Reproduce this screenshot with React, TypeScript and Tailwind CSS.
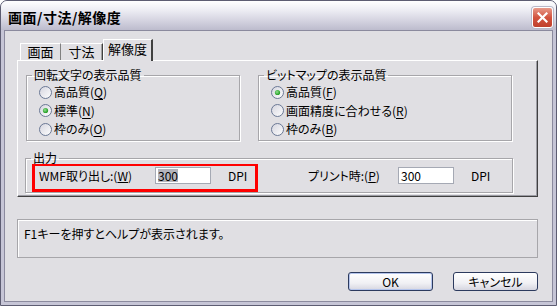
import React from 'react';

const font = "font-['Noto_Sans_CJK_JP','Noto_Sans_CJK_SC',sans-serif] [font-feature-settings:'palt']";

function Radio({ checked }: { checked?: boolean }) {
  return (
    <svg width="13" height="13" viewBox="0 0 13 13" className="shrink-0">
      <defs>
        <linearGradient id="radioFill" x1="0" y1="0" x2="1" y2="1">
          <stop offset="0" stopColor="#d4d4de" />
          <stop offset="1" stopColor="#ffffff" />
        </linearGradient>
        <radialGradient id="radioDot" cx="0.4" cy="0.4" r="0.6">
          <stop offset="0" stopColor="#8fe08f" />
          <stop offset="1" stopColor="#1f9a1f" />
        </radialGradient>
      </defs>
      <circle cx="6.5" cy="6.5" r="6" fill="url(#radioFill)" stroke="#6a7894" />
      {checked && <circle cx="6.5" cy="6.5" r="2.6" fill="url(#radioDot)" />}
    </svg>
  );
}

function Option({ text, mn, checked }: { text: string; mn: string; checked?: boolean }) {
  return (
    <div className="h-[18.5px] flex items-center gap-[2px] pl-[12px]">
      <Radio checked={checked} />
      <span>
        {text}(<u className="underline-offset-2">{mn}</u>)
      </span>
    </div>
  );
}

function Group({ title, width, children }: { title: string; width: string; children: React.ReactNode }) {
  return (
    <fieldset className={`${width} h-[73px] border border-[#a7a6aa] shadow-[inset_1px_1px_0_#ffffff,1px_1px_0_#ffffff]`}>
      <legend className="ml-[5px] px-[2px] leading-[14px]">{title}</legend>
      <div className="pt-[1px] flex flex-col">{children}</div>
    </fieldset>
  );
}

export default function App() {
  return (
    <div className={`relative w-[557px] h-[306px] text-[12px] text-black ${font}`}>
      <div className="h-full flex flex-col rounded-t-[7px] border border-[#5d5d72] bg-[#c6c5d6] overflow-hidden">
        {/* Title bar */}
        <div className="h-[29px] flex items-center pl-[7px] pr-[3px] pt-[3px] bg-[linear-gradient(to_bottom,#ffffff,#ebebf2_35%,#cfcedc_75%,#bdbccd)]">
          <span className="text-[14px] font-bold tracking-[0.5px]">画面/寸法/解像度</span>
          <div className="ml-auto w-[21px] h-[21px] rounded-[3px] border border-white bg-[linear-gradient(to_bottom,#e89a8a,#d2533f_50%,#c0402c)] flex items-center justify-center shadow-[0_0_0_1px_#b9b8c8]">
            <svg width="11" height="11" viewBox="0 0 11 11">
              <path d="M1.5 1.5l8 8M9.5 1.5l-8 8" stroke="#ffffff" strokeWidth="2.2" strokeLinecap="square" />
            </svg>
          </div>
        </div>

        {/* Body */}
        <div className="flex-1 mx-[3px] mb-[3px] border border-[#8b8a9e] bg-[#e0dfe3] flex flex-col pl-[12px] pr-[13px]">
          {/* Tabs */}
          <div className="mt-[8px] h-[21px] flex items-end pl-[3px]">
            <div className="w-[41px] h-[17px] border-t border-l border-white border-r border-r-[#808080] flex items-center justify-center leading-[14px] text-[13px]">画面</div>
            <div className="w-[42px] h-[17px] border-t border-white border-r border-r-[#404040] shadow-[inset_-1px_0_0_#a0a0a0] flex items-center justify-center leading-[14px] text-[13px]">寸法</div>
            <div className="relative z-10 -mb-px w-[50px] h-[22px] bg-[#e0dfe3] border-t border-l border-white border-r-2 border-r-[#404040] flex items-start justify-center pt-[2px] leading-[14px] text-[13px]">解像度</div>
          </div>

          {/* Panel */}
          <div className="h-[137px] w-[521px] border border-[#404040] border-t-white border-l-white shadow-[inset_-1px_-1px_0_#9c9ca4] pl-[8px] pt-[7px]">
            <div className="flex gap-[18px]">
              <Group title="回転文字の表示品質" width="w-[214px]">
                <Option text="高品質" mn="Q" />
                <Option text="標準" mn="N" checked />
                <Option text="枠のみ" mn="O" />
              </Group>
              <Group title="ビットマップの表示品質" width="w-[254px]">
                <Option text="高品質" mn="F" checked />
                <Option text="画面精度に合わせる" mn="R" />
                <Option text="枠のみ" mn="B" />
              </Group>
            </div>

            <fieldset className="mt-[10px] -ml-px w-[488px] h-[42px] border border-[#a7a6aa] shadow-[inset_1px_1px_0_#ffffff,1px_1px_0_#ffffff]">
              <legend className="ml-[5px] px-[2px] leading-[14px]">出力</legend>
              <div className="pt-[2px] pl-[13px] flex items-center h-[19px]">
                <span className="w-[116px]">
                  WMF取り出し:(<u>W</u>)
                </span>
                <div className="w-[56px] h-[17px] bg-white border border-[#a5a9b4] flex items-center pl-[2px]">
                  <span className="bg-[#b4b4bc] leading-[13px]">300</span>
                </div>
                <span className="ml-[17px] w-[80px]">DPI</span>
                <span className="w-[90px]">
                  プリント時:(<u>P</u>)
                </span>
                <div className="w-[56px] h-[17px] bg-white border border-[#a5a9b4] flex items-center pl-[2px]">
                  <span className="leading-[13px]">300</span>
                </div>
                <span className="ml-[17px]">DPI</span>
              </div>
            </fieldset>
          </div>

          {/* Status */}
          <div className="mt-[22px] w-[521px] h-[39px] border border-[#a7a6aa] shadow-[inset_1px_1px_0_#ffffff] pl-[6px] pt-[6px] leading-[16px]">
            F1キーを押すとヘルプが表示されます。
          </div>

          {/* Buttons */}
          <div className="mt-[14px] w-[521px] flex justify-end gap-[20px]">
            <button className="w-[85px] h-[19px] rounded-[3px] border border-[#2c3a5e] bg-[linear-gradient(to_bottom,#ffffff,#f0f0f4_60%,#d6d6e0)] shadow-[inset_0_0_0_1px_#b4c4ec] leading-[15px]">OK</button>
            <button className="w-[85px] h-[19px] rounded-[3px] border border-[#2c3a5e] bg-[linear-gradient(to_bottom,#ffffff,#f0f0f4_60%,#d6d6e0)] leading-[15px]">キャンセル</button>
          </div>
        </div>
      </div>

      {/* Red annotation */}
      <div className="absolute left-[32px] top-[164px] w-[226px] h-[28px] border-[3px] border-t-2 border-[#ff0000] pointer-events-none" />
    </div>
  );
}
